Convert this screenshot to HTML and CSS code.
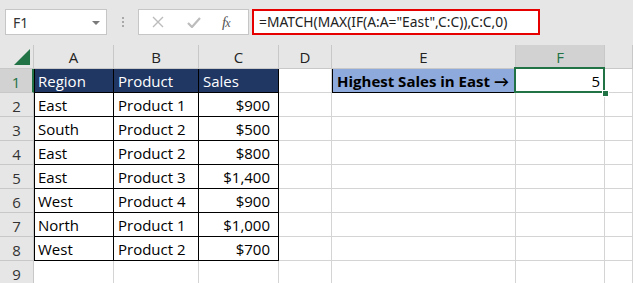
FILE: index.html
```html
<!DOCTYPE html>
<html>
<head>
<meta charset="utf-8">
<link rel="stylesheet" href="styles.css">
</head>
<body>
<div class="app">
  <div class="toolbar">
    <div class="namebox">
      <span class="nb-text">F1</span>
      <svg class="nb-arrow" width="8" height="4" viewBox="0 0 8 4"><path d="M0 0H8L4 4Z" fill="#7a7a7a"/></svg>
    </div>
    <div class="grip"><i></i><i></i><i></i></div>
    <div class="fbtns">
      <svg class="btn-x" width="12" height="12" viewBox="0 0 12 12"><path d="M1 1L11 11M11 1L1 11" stroke="#bcbcbc" stroke-width="1.4" fill="none"/></svg>
      <svg class="btn-ok" width="14" height="11" viewBox="0 0 14 11"><path d="M1 6L5 10L13 1" stroke="#bcbcbc" stroke-width="2.2" fill="none"/></svg>
      <span class="fx">f<span class="fx-x">x</span></span>
    </div>
    <div class="formula">=MATCH(MAX(IF(A:A="East",C:C)),C:C,0)</div>
  </div>
  <div class="sheet">
    <div class="corner"><svg width="16" height="16" viewBox="0 0 16 16"><path d="M16 0V16H0Z" fill="#217346"/></svg></div>
    <div class="ch">A</div><div class="ch">B</div><div class="ch">C</div><div class="ch">D</div><div class="ch">E</div><div class="ch ch-sel">F</div><div class="ch"></div>

    <div class="rh rh-sel">1</div>
    <div class="c t hd a">Region</div><div class="c t hd">Product</div><div class="c t hd">Sales</div><div class="c"></div>
    <div class="c label">Highest Sales in East →</div><div class="c num sel">5</div><div class="c"></div>

    <div class="rh">2</div>
    <div class="c t a">East</div><div class="c t">Product 1</div><div class="c t cur">$900</div><div class="c"></div><div class="c"></div><div class="c"></div><div class="c"></div>

    <div class="rh">3</div>
    <div class="c t a">South</div><div class="c t">Product 2</div><div class="c t cur">$500</div><div class="c"></div><div class="c"></div><div class="c"></div><div class="c"></div>

    <div class="rh">4</div>
    <div class="c t a">East</div><div class="c t">Product 2</div><div class="c t cur">$800</div><div class="c"></div><div class="c"></div><div class="c"></div><div class="c"></div>

    <div class="rh">5</div>
    <div class="c t a">East</div><div class="c t">Product 3</div><div class="c t cur">$1,400</div><div class="c"></div><div class="c"></div><div class="c"></div><div class="c"></div>

    <div class="rh">6</div>
    <div class="c t a">West</div><div class="c t">Product 4</div><div class="c t cur">$900</div><div class="c"></div><div class="c"></div><div class="c"></div><div class="c"></div>

    <div class="rh">7</div>
    <div class="c t a">North</div><div class="c t">Product 1</div><div class="c t cur">$1,000</div><div class="c"></div><div class="c"></div><div class="c"></div><div class="c"></div>

    <div class="rh">8</div>
    <div class="c t a">West</div><div class="c t">Product 2</div><div class="c t cur">$700</div><div class="c"></div><div class="c"></div><div class="c"></div><div class="c"></div>

    <div class="rh">9</div>
    <div class="c"></div><div class="c"></div><div class="c"></div><div class="c"></div><div class="c"></div><div class="c"></div><div class="c"></div>
  </div>
</div>
</body>
</html>
```

FILE: styles.css
```css
html, body {
  margin: 0;
  padding: 0;
  background: #ffffff;
}

.app {
  width: 633px;
  height: 283px;
  overflow: hidden;
  background: #ffffff;
}

.toolbar {
  height: 45px;
  box-sizing: border-box;
  background: #e6e6e6;
  display: flex;
  align-items: flex-start;
  padding-top: 9px;
  padding-left: 5px;
  font-family: "Noto Sans", "Open Sans", sans-serif;
}

.namebox {
  width: 102px;
  height: 26px;
  box-sizing: border-box;
  background: #ffffff;
  border: 1px solid #c6c6c6;
  display: flex;
  align-items: center;
  justify-content: space-between;
  padding: 0 6px 0 7px;
}

.nb-text {
  font-size: 14px;
  color: #333333;
}

.nb-arrow {
  margin-top: 1px;
}

.grip {
  width: 31px;
  height: 26px;
  display: flex;
  flex-direction: column;
  align-items: center;
  justify-content: center;
  gap: 2px;
}

.grip i {
  display: block;
  width: 2px;
  height: 2px;
  background: #a8a8a8;
}

.fbtns {
  width: 111px;
  height: 26px;
  box-sizing: border-box;
  background: #ffffff;
  border: 1px solid #c6c6c6;
  display: flex;
  align-items: center;
  padding-left: 13px;
}

.btn-x {
  margin-right: 23px;
}

.btn-ok {
  margin-right: 21px;
}

.fx {
  font-family: "Liberation Serif", serif;
  font-style: italic;
  font-size: 15px;
  color: #555555;
  letter-spacing: -1px;
}

.fx-x {
  font-size: 12px;
}

.formula {
  margin-left: 3px;
  width: 288px;
  height: 26px;
  box-sizing: border-box;
  background: #ffffff;
  border: 2px solid #e60000;
  font-size: 13.8px;
  color: #222222;
  padding-left: 5px;
  line-height: 22px;
  white-space: nowrap;
}

.sheet {
  display: grid;
  grid-template-columns: 34px 80px 85px 80px 53px 184px 89px 1fr;
  grid-auto-rows: 24px;
  font-family: "Open Sans", Lato, sans-serif;
  font-size: 15px;
  color: #000000;
}

.corner, .ch, .rh {
  background: #e6e6e6;
  box-sizing: border-box;
  border-right: 1px solid #c8c8c8;
  border-bottom: 1px solid #c8c8c8;
}

.corner {
  display: flex;
  align-items: flex-end;
  justify-content: flex-end;
  padding: 0 3px 3px 0;
}

.ch {
  display: flex;
  align-items: center;
  justify-content: center;
  color: #222222;
  font-size: 15px;
  padding-top: 1px;
}

.ch-sel {
  background: #d2d2d2;
  color: #217346;
  border-bottom: 2px solid #217346;
}

.rh {
  display: flex;
  align-items: center;
  justify-content: center;
  color: #333333;
  font-size: 15px;
  padding-top: 2px;
}

.rh-sel {
  background: #d2d2d2;
  color: #217346;
  border-right: 2px solid #217346;
}

.c {
  box-sizing: border-box;
  border-right: 1px solid #d4d4d4;
  border-bottom: 1px solid #d4d4d4;
  display: flex;
  align-items: center;
  padding: 1px 4px 0 4px;
  white-space: nowrap;
  position: relative;
}

.t {
  border-right-color: #000000;
  border-bottom-color: #000000;
}

.a {
  box-shadow: inset 1px 0 0 #000000;
}

.hd {
  background: #203764;
  color: #ffffff;
}

.cur {
  justify-content: flex-end;
  padding-right: 8px;
}

.label {
  background: #8ea9db;
  font-weight: bold;
  border-right-color: #000000;
  border-bottom-color: #000000;
  box-shadow: inset 1px 0 0 #000000;
  padding-left: 5px;
}

.num {
  justify-content: flex-end;
  padding-right: 4px;
}

.sel::after {
  content: "";
  position: absolute;
  left: -2px;
  top: -2px;
  right: -1px;
  bottom: -1px;
  border: 2px solid #217346;
}

.sel::before {
  content: "";
  position: absolute;
  right: -5px;
  bottom: -5px;
  width: 5px;
  height: 5px;
  background: #217346;
  border: 1px solid #ffffff;
  z-index: 2;
}
```
